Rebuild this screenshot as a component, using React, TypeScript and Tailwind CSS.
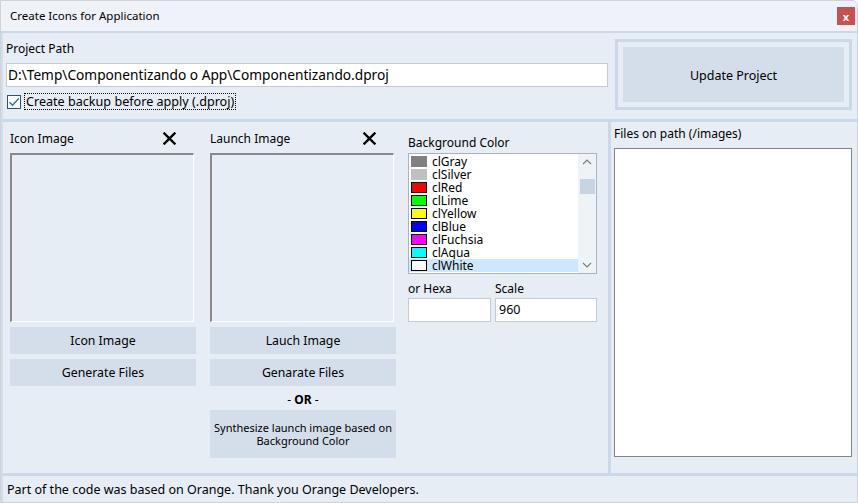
import React from "react";

const colors: { name: string; c: string; border: boolean }[] = [
  { name: "clGray", c: "#808080", border: false },
  { name: "clSilver", c: "#c0c0c0", border: false },
  { name: "clRed", c: "#ff0000", border: true },
  { name: "clLime", c: "#00ff00", border: true },
  { name: "clYellow", c: "#ffff00", border: true },
  { name: "clBlue", c: "#0000ff", border: true },
  { name: "clFuchsia", c: "#ff00ff", border: true },
  { name: "clAqua", c: "#00ffff", border: true },
  { name: "clWhite", c: "#ffffff", border: true },
];

function XIcon() {
  return (
    <svg width="13" height="13" viewBox="0 0 13 13">
      <path d="M1.5 1.5 L11.5 11.5 M11.5 1.5 L1.5 11.5" stroke="#000" strokeWidth="2.4" strokeLinecap="square" />
    </svg>
  );
}

function Btn({ children, className = "" }: { children: React.ReactNode; className?: string }) {
  return (
    <div className={"flex items-center justify-center bg-[#d3deea] text-center text-black " + className}>
      {children}
    </div>
  );
}

function ImageColumn({ title, b1, b2 }: { title: string; b1: string; b2: string }) {
  return (
    <div className="flex w-[186px] flex-col">
      <div className="flex h-[20px] items-center justify-between pr-[20px] pt-[1px]">
        <span className="text-[12px]">{title}</span>
        <XIcon />
      </div>
      <div className="mt-[5px] h-[169px] w-[184px] border-t-2 border-l-2 border-r border-b border-t-[#8a8a8a] border-l-[#8a8a8a] border-r-white border-b-white bg-[#e6edf5]" />
      <Btn className="mt-[5px] h-[27px] pt-[1px] text-[12.3px]">{b1}</Btn>
      <Btn className="mt-[5px] h-[27px] pt-[1px] text-[12.3px]">{b2}</Btn>
    </div>
  );
}

export default function App() {
  return (
    <div
      className="flex h-[503px] w-[858px] flex-col overflow-hidden rounded-tr-[6px] border border-[#cfd3d8] bg-[#e6edf5] text-black"
      style={{ fontFamily: '"Noto Sans", "Open Sans", sans-serif' }}
    >
      {/* Title bar */}
      <div className="flex h-[32px] shrink-0 items-center border-b-2 border-[#cad8e8] bg-[#eff2f8] pl-[9px] pr-[2px]">
        <span className="text-[11.5px]">Create Icons for Application</span>
        <div className="ml-auto flex h-[18px] w-[18px] items-center justify-center bg-[#c75050] text-[11px] font-bold leading-none text-white">
          x
        </div>
      </div>

      <div className="flex flex-1 flex-col border-l-2 border-[#d3deeb]">
        {/* Top panel */}
        <div className="flex h-[89px] shrink-0 border-b-[3px] border-[#cad8e8]">
          <div className="flex w-[605px] flex-col pl-[3px] pt-[5px]">
            <div className="flex h-[20px] items-center pt-[1px] text-[12px]">Project Path</div>
            <div className="mt-[5px] flex h-[24px] w-[602px] items-center border border-[#c5cbd2] bg-white pl-[1px] text-[13.7px]">
              D:\Temp\Componentizando o App\Componentizando.dproj
            </div>
            <div className="mt-[6px] flex h-[17px] items-center pl-[1px]">
              <div className="flex h-[14px] w-[14px] items-center justify-center border border-[#2f4f7f] bg-white">
                <svg width="12" height="12" viewBox="0 0 12 12">
                  <path d="M1.5 6.2 L4.5 9.2 L10.8 2.5" stroke="#1f6fc5" strokeWidth="1.4" fill="none" />
                </svg>
              </div>
              <span className="ml-[3px] border border-dotted border-black px-[1px] text-[12.6px] leading-[15px]">
                Create backup before apply (.dproj)
              </span>
            </div>
          </div>
          <div className="ml-[7px] mt-[6px] flex h-[71px] w-[237px] border-[3px] border-[#cad8e8] p-[5px]">
            <Btn className="h-full w-full pt-[3px] text-[12.5px]">Update Project</Btn>
          </div>
        </div>

        {/* Lower area */}
        <div className="flex h-[354px] shrink-0 border-b-[3px] border-[#cad8e8]">
          <div className="flex w-[608px] shrink-0 gap-[14px] border-r-[3px] border-[#cad8e8] pl-[7px] pt-[6px]">
            <ImageColumn title="Icon Image" b1="Icon Image" b2="Generate Files" />
            <div className="flex w-[186px] flex-col">
              <ImageColumn title="Launch Image" b1="Lauch Image" b2="Genarate Files" />
              <div className="mt-[3px] flex h-[21px] items-center justify-center text-[12px]">
                -&nbsp;<b>OR</b>&nbsp;-
              </div>
              <Btn className="h-[48px] px-[2px] text-[11px] leading-[13px]">
                Synthesize launch image based on Background Color
              </Btn>
            </div>
            <div className="-ml-[2px] flex w-[189px] flex-col pt-[4px]">
              <div className="flex h-[20px] items-center pt-[1px] text-[12px]">Background Color</div>
              <div className="mt-[1px] flex h-[121px] border border-[#abb3bc] bg-white">
                <div className="flex flex-1 flex-col pt-[1px]">
                  {colors.map((c, i) => (
                    <div
                      key={c.name}
                      className={
                        "flex h-[13px] items-center pl-[2px] text-[12px] leading-[13px] " +
                        (i === colors.length - 1 ? "bg-[#cce8ff]" : "")
                      }
                    >
                      <div
                        className={"h-[11px] w-[16px] shrink-0 " + (c.border ? "border border-black" : "")}
                        style={{ backgroundColor: c.c }}
                      />
                      <span className="ml-[5px]">{c.name}</span>
                    </div>
                  ))}
                </div>
                <div className="flex w-[18px] flex-col items-center bg-[#eef3f8]">
                  <svg className="mt-[5px]" width="10" height="6" viewBox="0 0 10 6">
                    <path d="M1 5 L5 1 L9 5" stroke="#7a7a7a" strokeWidth="1.1" fill="none" />
                  </svg>
                  <div className="mt-[14px] h-[15px] w-[15px] bg-[#c5d5e5]" />
                  <div className="flex-1" />
                  <svg className="mb-[5px]" width="10" height="6" viewBox="0 0 10 6">
                    <path d="M1 1 L5 5 L9 1" stroke="#7a7a7a" strokeWidth="1.1" fill="none" />
                  </svg>
                </div>
              </div>
              <div className="mt-[4px] flex gap-[4px]">
                <div className="flex w-[83px] flex-col">
                  <div className="flex h-[20px] items-center pt-[1px] text-[12px]">or Hexa</div>
                  <div className="h-[24px] border border-[#c5cbd2] bg-white" />
                </div>
                <div className="flex flex-1 flex-col">
                  <div className="flex h-[20px] items-center pt-[1px] text-[12px]">Scale</div>
                  <div className="flex h-[24px] items-center border border-[#c5cbd2] bg-white pl-[3px] text-[12.5px]">960</div>
                </div>
              </div>
            </div>
          </div>
          <div className="flex flex-1 flex-col pl-[3px] pt-[1px]">
            <div className="flex h-[20px] items-center pt-[1px] text-[12px]">Files on path (/images)</div>
            <div className="mt-[5px] h-[309px] w-[238px] border border-[#7f858c] bg-white" />
          </div>
        </div>

        {/* Footer */}
        <div className="flex flex-1 items-center pl-[4px] pt-[2px] text-[12.5px]">
          Part of the code was based on Orange. Thank you Orange Developers.
        </div>
      </div>
    </div>
  );
}
